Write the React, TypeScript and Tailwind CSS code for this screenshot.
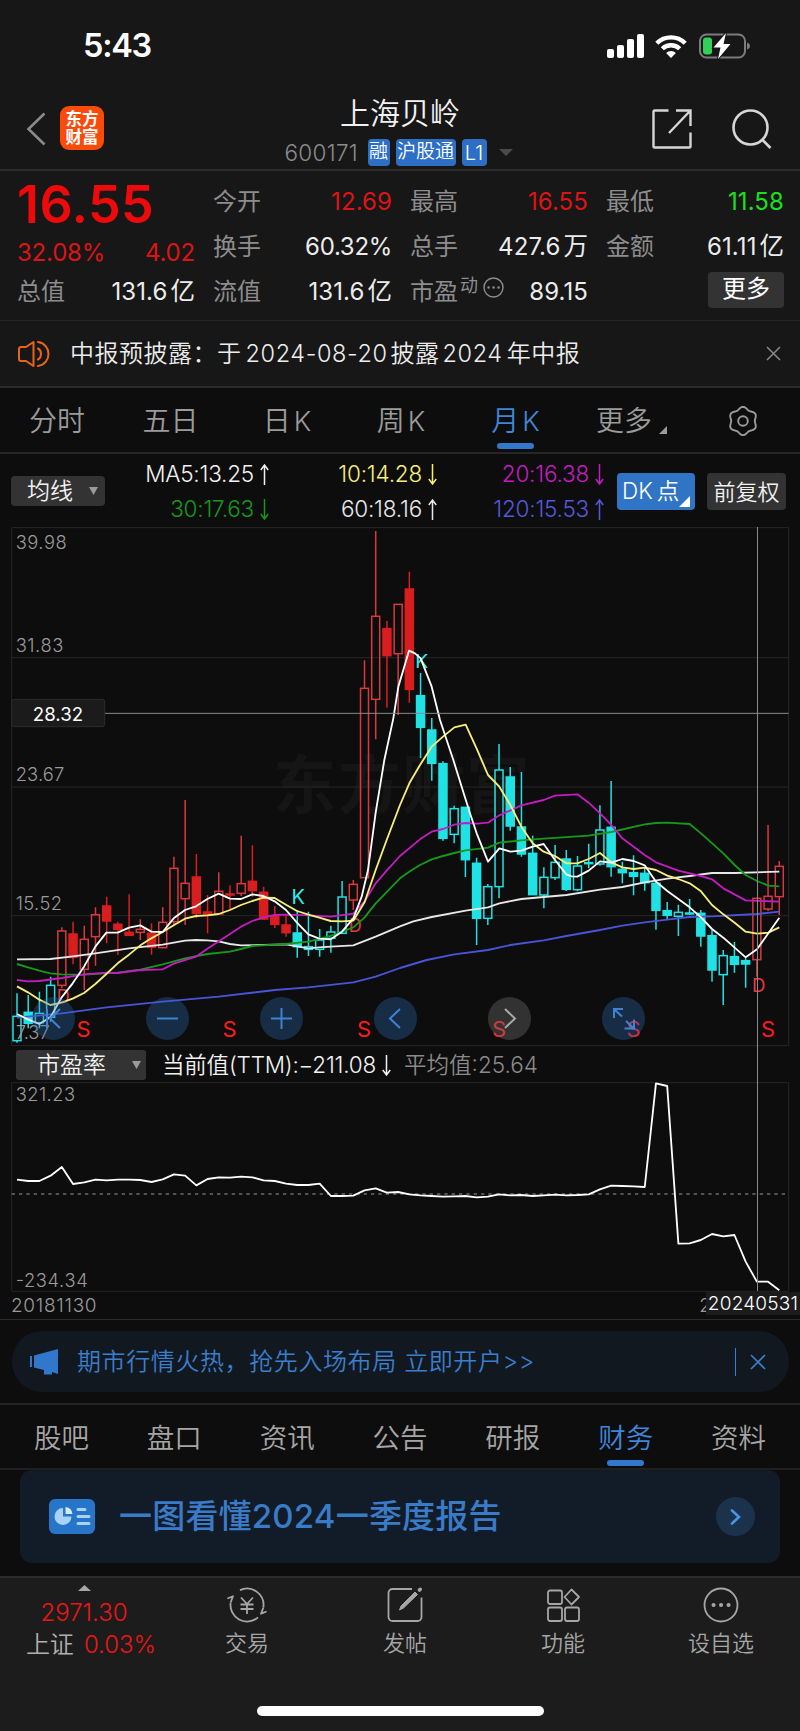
import type { ReactNode } from 'react';
import { clsx } from 'clsx';

type CandleKind = 'up' | 'upSolid' | 'down' | 'downSolid';
type Candle = [high: number, top: number, bottom: number, low: number, kind: CandleKind];

const U: CandleKind = 'up';
const US: CandleKind = 'upSolid';
const D: CandleKind = 'down';
const DS: CandleKind = 'downSolid';

// Monthly candles in chart units (3 units per pixel), oldest first
const CANDLES: Candle[] = [
  [640, 709, 782, 788, D], [645, 697, 730, 745, DS], [635, 700, 728, 745, D], [590, 616, 712, 725, D],
  [442, 453, 616, 625, U], [425, 462, 532, 553, US], [437, 478, 568, 630, U], [382, 404, 470, 557, U],
  [350, 378, 423, 490, US], [425, 433, 448, 525, US], [343, 457, 466, 466, US], [418, 448, 457, 480, U],
  [430, 460, 502, 524, US], [382, 427, 503, 505, U], [230, 265, 425, 435, U], [60, 310, 356, 435, U],
  [222, 291, 400, 415, US], [345, 396, 404, 460, US], [277, 334, 402, 402, U], [316, 342, 345, 388, US],
  [167, 311, 340, 348, U], [196, 304, 332, 350, US], [320, 337, 417, 420, US], [378, 408, 433, 444, US],
  [408, 435, 458, 470, US], [390, 459, 500, 533, DS], [395, 500, 508, 528, D], [447, 480, 508, 530, D],
  [437, 456, 475, 518, D], [303, 351, 460, 460, D], [300, 313, 360, 390, U], [-359, -275, 293, 293, U],
  [-747, -491, -242, -122, U], [-477, -454, -373, -217, US], [-527, -527, -379, -195, U], [-625, -573, -272, -232, US],
  [-321, -253, -158, -66, DS], [-186, -150, -50, 2, DS], [-56, -49, 175, 182, DS], [77, 86, 163, 190, D],
  [82, 82, 239, 291, DS], [233, 250, 415, 495, DS], [312, 320, 415, 435, D], [-108, -30, 320, 355, D],
  [-39, -9, 138, 152, DS], [-24, 141, 222, 230, DS], [167, 220, 344, 344, DS], [262, 292, 345, 385, D],
  [195, 247, 293, 300, D], [210, 237, 328, 333, DS], [228, 258, 329, 334, D], [191, 248, 251, 265, DS],
  [76, 150, 252, 257, D], [3, 142, 260, 290, DS], [245, 268, 278, 310, DS], [226, 278, 289, 346, DS],
  [262, 280, 308, 332, DS], [300, 310, 391, 449, DS], [366, 392, 406, 417, DS], [374, 397, 409, 468, D],
  [357, 399, 402, 405, DS], [390, 400, 468, 500, DS], [450, 467, 570, 605, DS], [510, 527, 584, 675, D],
  [486, 530, 553, 578, DS], [535, 542, 552, 623, DS], [355, 355, 539, 590, U], [135, 349, 387, 393, U],
  [243, 259, 350, 405, U],
];

const AVERAGES = [
  {
    color: '#4a54d8',
    points:
      '51,713 185,700 320,682 488,665 656,650 825,630 925,622 1060,607 1127,590 1200,564 1280,540 1363,523 1464,510 1531,495 1631,481 1699,468 1800,450 1867,437 1934,427 2002,419 2069,411 2136,409 2271,402 2338,395',
  },
  {
    color: '#e8e8e8',
    points:
      '51,538 151,537 219,529 286,520 387,505 488,494 555,482 588,480 622,481 656,484 690,492 723,496 790,495 858,493 925,505 958,502 992,500 1060,496 1127,470 1200,439 1240,424 1295,411 1397,392 1464,382 1498,370 1564,357 1699,345 1800,329 1867,321 1934,307 2002,296 2069,288 2136,279 2204,279 2338,275',
  },
  {
    color: '#17981b',
    points:
      '51,552 84,562 118,572 151,580 185,583 252,584 353,578 421,569 488,553 555,535 622,522 690,515 723,507 757,498 858,492 925,485 992,468 1026,455 1060,442 1094,412 1127,370 1200,295 1230,274 1260,255 1295,238 1329,228 1363,219 1397,211 1464,203 1498,188 1564,181 1631,176 1766,167 1834,156 1934,133 1968,129 2002,128 2069,132 2103,160 2170,220 2204,255 2237,285 2271,303 2305,317 2338,319',
  },
  {
    color: '#c31cc0',
    points:
      '51,600 84,604 118,603 185,594 252,583 320,578 353,579 421,570 488,568 521,551 588,530 622,506 690,462 723,440 757,423 790,412 824,405 858,404 925,406 992,410 1060,401 1094,364 1127,310 1160,272 1200,228 1260,178 1295,155 1329,147 1363,134 1397,129 1431,131 1464,128 1498,106 1564,76 1631,60 1665,47 1732,43 1766,68 1800,100 1834,135 1867,175 1934,225 1968,247 2035,272 2103,288 2136,298 2170,325 2237,361 2338,365',
  },
  {
    color: '#f7ef7a',
    points:
      '51,619 84,637 118,659 151,675 185,668 218,656 252,639 286,612 319,582 353,550 387,524 421,496 454,475 488,456 521,436 555,416 588,408 622,406 656,402 690,390 723,375 757,363 790,353 824,354 858,374 891,393 925,404 958,413 992,423 1026,424 1060,422 1094,366 1127,270 1160,180 1200,75 1228,10 1260,-45 1295,-100 1329,-130 1363,-158 1397,-166 1431,-92 1464,-15 1498,20 1531,75 1564,140 1598,190 1631,215 1665,228 1699,250 1732,250 1766,237 1800,219 1834,247 1867,262 1901,267 1934,263 1968,270 2002,287 2035,297 2069,310 2103,334 2136,375 2170,403 2204,428 2237,455 2271,461 2305,458 2338,442',
  },
  {
    color: '#ffffff',
    points:
      '51,702 84,718 118,732 151,712 168,682 185,652 218,610 252,560 286,500 319,458 353,458 387,443 421,436 454,455 488,456 521,415 555,390 588,379 622,357 656,341 690,356 723,357 757,343 790,348 824,364 858,390 891,428 925,463 958,476 992,478 1026,455 1060,415 1085,350 1104,270 1127,98 1153,-60 1180,-185 1195,-280 1227,-388 1245,-380 1262,-365 1295,-280 1320,-180 1360,-60 1388,30 1410,100 1430,160 1464,245 1498,205 1531,215 1564,212 1598,200 1631,192 1665,240 1699,283 1715,289 1732,290 1766,272 1800,244 1834,248 1867,237 1901,243 1934,256 1968,305 2002,333 2035,357 2069,382 2103,412 2136,447 2170,473 2204,503 2237,532 2271,508 2305,460 2338,413',
  },
];

const SIGNALS = [
  { x: 895, y: 373, text: 'K', color: '#35e8ea', size: 60 },
  { x: 1265, y: -336, text: 'K', color: '#35e8ea', size: 58 },
  { x: 190, y: 669, text: 'D', color: '#e23a3f', size: 54 },
  { x: 1066, y: 455, text: 'D', color: '#e23a3f', size: 54 },
  { x: 2276, y: 636, text: 'D', color: '#e23a3f', size: 56 },
  ...[251, 689, 1092, 1497, 1901, 2304].map((x) => ({ x, y: 771, text: 'S', color: '#ff1a1a', size: 66 })),
];

// Offsets from the top of the ratio pane, in the same units
const PE_VALUES = [
  419, 423, 423, 407, 381, 432, 427, 419, 421, 419, 419, 420, 426, 418, 403, 407, 436, 417, 412, 413, 410, 412, 421, 423,
  431, 435, 435, 431, 468, 468, 467, 451, 445, 458, 456, 463, 466, 468, 470, 469, 468, 472, 470, 463, 466, 465, 468, 466,
  464, 466, 465, 463, 448, 437, 438, 439, 441, 130, 138, 611, 610, 600, 582, 589, 585, 665, 725, 725, 751,
];

const candleX = (i: number) => 51 + i * 33.63;

// Six soft lobes around the centre, one of them pointing up
const GEAR_POINTS = Array.from({ length: 72 }, (_, i) => {
  const angle = (i / 72) * Math.PI * 2;
  const radius = 13 + 1.2 * Math.cos(6 * angle);
  return `${(15 + radius * Math.sin(angle)).toFixed(2)},${(15 - radius * Math.cos(angle)).toFixed(2)}`;
}).join(' ');

function Num({ children, className }: { children: ReactNode; className?: string }) {
  return <span className={clsx('whitespace-nowrap', className)}>{children}</span>;
}

function StatusBar() {
  return (
    <div className="flex h-[90px] items-center justify-between pl-[83px] pr-[50px] pt-px">
      <span className="pt-px text-[32.500px] font-semibold leading-none tracking-[-1.300px] text-white">5:43</span>
      <div className="flex items-center">
        <svg className="h-6 w-[37px]" viewBox="0 0 37 24" fill="#fff">
          <rect x="0" y="15" width="7" height="9" rx="2" />
          <rect x="10" y="11" width="7" height="13" rx="2" />
          <rect x="20" y="5" width="7" height="19" rx="2" />
          <rect x="30" y="0" width="7" height="24" rx="2" />
        </svg>
        <svg className="ml-[11px] h-6 w-8" viewBox="0 0 32 24" fill="none" stroke="#fff" strokeWidth="4.4">
          <path d="M1.8 9.2a20.3 20.3 0 0 1 28.4 0" />
          <path d="M7.3 14.8a12.4 12.4 0 0 1 17.4 0" />
          <path d="M16 24l-4.9-5a7 7 0 0 1 9.8 0z" fill="#fff" stroke="none" />
        </svg>
        <svg className="ml-3 h-[26px] w-[51px]" viewBox="0 0 51 26" fill="none">
          <rect x="1" y="1.5" width="45" height="23" rx="6.5" stroke="#7c7c7c" strokeWidth="2" />
          <path d="M48 9.5c2.4.8 3 2 3 3.500s-.6 2.700-3 3.500z" fill="#7c7c7c" />
          <rect x="4" y="4.500" width="9" height="17" rx="3" fill="#31d158" />
          <path d="M27 0L14.500 14.500h7L19 26 31.500 11h-7z" fill="#fff" stroke="#171717" strokeWidth="2" paintOrder="stroke" />
        </svg>
      </div>
    </div>
  );
}

function Header() {
  return (
    <header className="flex h-[81px] border-b-2 border-[#2b2b2b]">
      <div className="flex w-[240px] items-start pl-[26px] pt-4">
        <svg className="mt-[6px] h-[34px] w-5" viewBox="0 0 20 34" fill="none" stroke="#8a8a8a" strokeWidth="2.600">
          <path d="M18.500 1.500L2.500 17l16 15.500" />
        </svg>
        <div className="ml-[14px] flex size-[44px] flex-col items-center justify-center rounded-[9px] bg-[#fb4b0b] text-[16.500px] font-bold leading-[18px] text-white">
          <span>东方</span>
          <span>财富</span>
        </div>
      </div>
      <div className="flex flex-1 flex-col items-center">
        <h1 className="mt-[6px] text-[30px] leading-[34px] text-[#f2f2f2]">上海贝岭</h1>
        <div className="mt-[9px] flex h-[27px] items-center gap-[6px] pr-[3px] text-[21px]">
          <span className="w-[77px] text-[22.500px] tracking-[0.300px] text-[#8b8b8b]">600171</span>
          <span className="flex h-[27px] w-[22px] items-center justify-center rounded bg-[#2c6fc4] text-[19px] text-white">融</span>
          <span className="flex h-[27px] w-[60px] items-center justify-center whitespace-nowrap rounded bg-[#2c6fc4] text-[19px] text-white">沪股通</span>
          <span className="flex h-[27px] w-[25px] items-center justify-center rounded bg-[#2c6fc4] text-[20px] text-white">L1</span>
          <svg className="ml-[6px] h-[7px] w-[14px]" viewBox="0 0 14 7" fill="#4a4a4a">
            <path d="M0 0h14L7 7z" />
          </svg>
        </div>
      </div>
      <div className="flex w-[240px] items-start justify-end pr-[28px] pt-[19px]">
        <svg className="h-10 w-10" viewBox="0 0 40 40" fill="none" stroke="#d6d6d6" strokeWidth="2.400">
          <path d="M16.500 1.500H2.500a1 1 0 0 0-1 1v35a1 1 0 0 0 1 1h35a1 1 0 0 0 1-1V23.500M24 1.500h14.500V17M38 2L17 24" />
        </svg>
        <svg className="ml-10 h-10 w-[40px]" viewBox="0 0 40 40" fill="none" stroke="#d6d6d6" strokeWidth="2.600">
          <circle cx="18.500" cy="18.500" r="17" />
          <path d="M30 30.500l8.500 8.500" />
        </svg>
      </div>
    </header>
  );
}

function QuoteCell({ label, value, color = 'text-[#ececec]' }: { label: ReactNode; value: ReactNode; color?: string }) {
  return (
    <div className="flex h-[45px] items-center justify-between">
      <span className="text-[24px] tracking-normal text-[#8d8d8d]">{label}</span>
      <Num className={color}>{value}</Num>
    </div>
  );
}

function Unit({ children }: { children: ReactNode }) {
  return <span className="ml-[3px] text-[24.500px] tracking-normal">{children}</span>;
}

function Quote() {
  return (
    <section className="flex h-[149px] pl-[17px] pr-4 text-[24px] font-normal leading-none tracking-[0.100px]">
      <div className="w-[178px]">
        <div className="flex h-[60px] items-center pt-[7px] text-[52px] font-semibold tracking-[0.400px] text-[#ee0a0a]">16.55</div>
        <div className="flex h-[41px] items-center justify-between pt-[2px] tracking-[-0.200px] text-[#dc1414]">
          <span>32.08%</span>
          <span>4.02</span>
        </div>
        <div className="-mt-[3px]">
          <QuoteCell label="总值" value={<>131.6<Unit>亿</Unit></>} />
        </div>
      </div>
      <div className="ml-[18px] w-[179px] pt-2">
        <QuoteCell label="今开" value="12.69" color="text-[#dc1414]" />
        <QuoteCell label="换手" value={<span className="tracking-[-0.300px]">60.32%</span>} />
        <QuoteCell label="流值" value={<>131.6<Unit>亿</Unit></>} />
      </div>
      <div className="ml-[18px] w-[178px] pt-2">
        <QuoteCell label="最高" value="16.55" color="text-[#dc1414]" />
        <QuoteCell label="总手" value={<>427.6<Unit>万</Unit></>} />
        <QuoteCell
          label={
            <span className="flex items-center">
              市盈
              <span className="mb-3 ml-[2px] text-[18px]">动</span>
              <svg className="mb-2 ml-[5px] size-[21px]" viewBox="0 0 21 21" fill="none" stroke="#8d8d8d" strokeWidth="1.400">
                <circle cx="10.500" cy="10.500" r="9.500" />
                <path d="M5.500 10.500h.1M10.500 10.500h.1M15.500 10.500h.1" strokeLinecap="round" strokeWidth="2.400" />
              </svg>
            </span>
          }
          value="89.15"
        />
      </div>
      <div className="ml-[18px] w-[178px] pt-2">
        <QuoteCell label="最低" value="11.58" color="text-[#1be01b]" />
        <QuoteCell label="金额" value={<>61.11<Unit>亿</Unit></>} />
        <div className="flex h-[45px] items-center justify-end pb-[3px]">
          <button className="h-9 w-[76px] rounded bg-[#333] pb-0.5 text-[24px] tracking-normal text-white">更多</button>
        </div>
      </div>
    </section>
  );
}

function Notice() {
  return (
    <section className="flex h-[68px] items-center border-b-2 border-t border-b-[#2b2b2b] border-t-[#242424] pl-[18px] pr-[19px]">
      <svg className="h-[28px] w-[32px]" viewBox="0 0 32 28" fill="none" stroke="#e8641b" strokeWidth="2">
        <path d="M15.500 2v24L8 21H3a2 2 0 0 1-2-2V9a2 2 0 0 1 2-2h5z" strokeLinejoin="round" />
        <path d="M20 8.500c4 2 4 9 0 11M20 2c14 2 14 22 0 24" strokeLinecap="round" />
      </svg>
      <p className="ml-5 flex flex-1 items-baseline whitespace-nowrap text-[24px] tracking-[0.500px] text-[#ededed]">
        中报预披露：于
        <span className="ml-1 text-[23.500px] tracking-[0.600px]">2024-08-20</span>
        <span className="ml-[3px]">披露</span>
        <span className="ml-[3px] text-[23.500px] tracking-[0.600px]">2024</span>
        <span className="ml-1">年中报</span>
      </p>
      <svg className="size-[15px]" viewBox="0 0 15 15" stroke="#8a8a8a" strokeWidth="1.500">
        <path d="M1 1l13 13M14 1L1 14" />
      </svg>
    </section>
  );
}

const PERIODS = [
  { label: '分时', width: 'w-[114px]' },
  { label: '五日', width: 'w-[113px]' },
  { label: '日', width: 'w-[120px]', suffix: 'K' },
  { label: '周', width: 'w-[108px]', suffix: 'K' },
  { label: '月', width: 'w-[121px]', suffix: 'K', active: true },
];

function PeriodTabs() {
  return (
    <nav className="flex h-[66px] border-b-2 border-[#262626] text-[28px] leading-none text-[#9b9b9b]">
      {PERIODS.map(({ label, width, suffix, active }) => (
        <div key={label} className={clsx('flex flex-col items-center pt-[18px]', width, active && 'text-[#3f86da]')}>
          <span className="flex h-[30px] items-center">
            {label}
            {suffix && <span className="ml-[3px] text-[27px]">{suffix}</span>}
          </span>
          {active && <span className="mt-[7px] h-[6px] w-[37px] rounded-[3px] bg-[#3178cc]" />}
        </div>
      ))}
      <div className="ml-[20px] flex items-start pt-[18px]">
        <span className="flex h-[30px] items-center">更多</span>
        <svg className="ml-[7px] mt-[20px] size-2" viewBox="0 0 8 8" fill="#9b9b9b">
          <path d="M8 0v8H0z" />
        </svg>
      </div>
      <svg className="ml-[61px] mt-[18px] size-[30px]" viewBox="0 0 30 30" fill="none" stroke="#9b9b9b" strokeWidth="1.900">
        <polygon points={GEAR_POINTS} strokeLinejoin="round" />
        <circle cx="15" cy="15" r="4.800" />
      </svg>
    </nav>
  );
}

function Arrow({ down }: { down?: boolean }) {
  return (
    <svg className="ml-[6px] h-[21px] w-[9px]" viewBox="0 0 9 21" fill="none" stroke="currentColor" strokeWidth="1.500">
      <path d={down ? 'M4.500 0v20M.8 15l3.700 5 3.700-5' : 'M4.500 21V1M.8 6l3.700-5 3.700 5'} />
    </svg>
  );
}

const MA_LABELS = [
  { text: 'MA5:13.25', color: 'text-[#f2f2f2]', down: false },
  { text: '10:14.28', color: 'text-[#f7ef7a]', down: true },
  { text: '20:16.38', color: 'text-[#c31cc0]', down: true },
  { text: '30:17.63', color: 'text-[#17981b]', down: true },
  { text: '60:18.16', color: 'text-[#e8e8e8]', down: false },
  { text: '120:15.53', color: 'text-[#5358dd]', down: false },
];

function IndicatorBar() {
  return (
    <div className="flex h-[73px] items-start pl-[11px]">
      <button className="mt-[22px] flex h-[30px] w-[94px] items-center rounded bg-[#333] pl-4 text-[23px] leading-none text-[#f2f2f2]">
        均线
        <svg className="ml-[16px] h-[8px] w-[9px]" viewBox="0 0 9 8" fill="#9b9b9b">
          <path d="M0 0h9L4.500 8z" />
        </svg>
      </button>
      <div className="grid grid-cols-[164px_168px_167px] pt-[3px] text-[22.500px] leading-none tracking-[-0.200px]">
        {MA_LABELS.map(({ text, color, down }) => (
          <div key={text} className={clsx('flex h-[35px] items-center justify-end', color)}>
            {text}
            <Arrow down={down} />
          </div>
        ))}
      </div>
      <button className="relative ml-[13px] mt-[19px] h-[37px] w-[78px] whitespace-nowrap rounded bg-[#2f74c5] pl-[5px] text-left text-[22.500px] leading-none text-white">
        DK<span className="ml-1">点</span>
        <svg className="absolute bottom-[3px] right-[5px] size-[11px]" viewBox="0 0 11 11" fill="#fff">
          <path d="M11 0v11H0z" />
        </svg>
      </button>
      <button className="ml-3 mt-[19px] h-[37px] w-[79px] rounded bg-[#333] text-[22px] leading-none text-[#f2f2f2]">前复权</button>
    </div>
  );
}

const CHART_BUTTONS: { id: string; icon: ReactNode; muted?: boolean }[] = [
  { id: 'first', icon: <path d="M28 12L18 21.500 28 31M15 12v19" /> },
  { id: 'zoom-out', icon: <path d="M11 21.500h21" /> },
  { id: 'zoom-in', icon: <path d="M11 21.500h21M21.500 11v21" /> },
  { id: 'prev', icon: <path d="M26 12l-10 9.500L26 31" /> },
  { id: 'next', icon: <path d="M17 12l10 9.500L17 31" />, muted: true },
  { id: 'expand', icon: <path d="M12 21v-9h9M12 12l8 7.500M22.500 31.500H32v-9M32 31.500L24 24" /> },
];

function CandleChart() {
  return (
    <div className="relative h-[520px]">
      <svg className="block h-[520px] w-[800px]" viewBox="0 -759 2400 1560" fill="none">
        <text
          x="1204"
          y="84"
          textAnchor="middle"
          fontSize="190"
          fontWeight="700"
          fill="#151515"
          textLength="770"
          className="font-['Noto_Sans_CJK_SC',sans-serif]"
        >
          东方财富
        </text>
        <path d="M35-757H2366V797H35zM35-367H2366M35 21H2366M35 407H2366" stroke="#262626" strokeWidth="3" />
        {CANDLES.map(([high, top, bottom, low, kind], i) => {
          const x = candleX(i);
          const up = kind === 'up' || kind === 'upSolid';
          const solid = kind === 'upSolid' || kind === 'downSolid';
          const color = up ? (solid ? '#d81e1f' : '#d9383c') : '#20e2e4';
          return (
            <g key={i} stroke={color} strokeWidth="4.500">
              <path d={`M${x} ${high}V${top}M${x} ${bottom}V${low}`} />
              <rect x={x - 12} y={top} width="24" height={bottom - top} fill={solid ? color : 'none'} />
            </g>
          );
        })}
        {SIGNALS.map(({ x, y, text, color, size }) => (
          <text key={`${x}-${y}`} x={x} y={y} fontSize={size} fill={color} textAnchor="middle" fontWeight="400">
            {text}
          </text>
        ))}
        {AVERAGES.map(({ color, points }) => (
          <polyline key={color} points={points} stroke={color} strokeWidth="5.500" strokeLinejoin="round" />
        ))}
        <path d="M315-200H2366" stroke="#8a8a8a" strokeWidth="3" />
        <rect x="35" y="-242" width="279" height="82" rx="8" fill="#1b1b1b" stroke="#2c2c2c" strokeWidth="3" />
        <text x="174" y="-177" fontSize="56" fill="#fff" textAnchor="middle" fontWeight="400">28.32</text>
        <g fontSize="55" fill="#9a9a9a">
          <text x="47" y="-694" textLength="153">39.98</text>
          <text x="47" y="-384" textLength="143">31.83</text>
          <text x="47" y="3" textLength="146">23.67</text>
          <text x="47" y="389" textLength="139">15.52</text>
          <text x="47" y="778" textLength="102">7.37</text>
        </g>
      </svg>
      <div className="absolute left-[32px] top-[470px] flex gap-[71px]">
        {CHART_BUTTONS.map(({ id, icon, muted }) => (
          <button key={id} className={clsx('size-[43px] rounded-full', muted ? 'bg-[#777]/35' : 'bg-[#2e6cb8]/33')}>
            <svg viewBox="0 0 43 43" fill="none" stroke={muted ? '#a8a8a8' : '#3f82d2'} strokeWidth="2">
              {icon}
            </svg>
          </button>
        ))}
      </div>
    </div>
  );
}

function RatioPane() {
  const points = PE_VALUES.map((value, i) => `${candleX(i)},${value}`).join(' ');
  return (
    <>
      <div className="flex h-[35px] items-center pl-4 pt-px text-[22px] leading-none">
        <button className="flex h-[30px] w-[130px] items-center rounded-[3px] bg-[#333] pl-[21px] text-[23px] text-[#f2f2f2]">
          市盈率
          <svg className="ml-[26px] h-[8px] w-[9px]" viewBox="0 0 9 8" fill="#9b9b9b">
            <path d="M0 0h9L4.500 8z" />
          </svg>
        </button>
        <span className="ml-4 flex items-center whitespace-nowrap text-[22.500px] tracking-[-0.200px] text-[#f2f2f2]">
          当前值(TTM):−211.08
          <Arrow down />
        </span>
        <span className="ml-[13px] whitespace-nowrap text-[22.500px] text-[#8a8a8a]">平均值:25.64</span>
      </div>
      <svg className="block h-[210px] w-[800px]" viewBox="0 126 2400 630" fill="none">
        <path d="M35 128H2366V754H35z" stroke="#262626" strokeWidth="3" />
        <path d="M35 462H2366" stroke="#9a9a9a" strokeWidth="3" strokeDasharray="10 12" />
        <polyline points={points} stroke="#fff" strokeWidth="5.500" strokeLinejoin="round" />
        <g fontSize="55" fill="#9a9a9a">
          <text x="47" y="184" textLength="178">321.23</text>
          <text x="47" y="742" textLength="216">-234.34</text>
        </g>
      </svg>
      <div className="relative flex h-[28px] items-center border-b border-[#2b2b2b] pb-px pl-[11px] text-[19px] leading-none text-[#9a9a9a]">
        <span className="flex-1 tracking-[0.700px]">20181130</span>
        <span className="mr-[89px]">2</span>
        <span className="absolute right-0 top-0 flex h-[23px] w-[94px] items-center justify-center bg-[#1c1c1c] tracking-[0.200px] text-white">
          20240531
        </span>
      </div>
    </>
  );
}

function PromoBar() {
  return (
    <div className="border-b-2 border-[#242424] pb-[11px] pl-3 pr-[11px] pt-[11px]">
      <div className="flex h-[61px] items-center rounded-[30px] bg-[#11181f] pl-[17px] pr-[23px] text-[#3b7ecb]">
        <svg className="h-[26px] w-[30px]" viewBox="0 0 30 26" fill="#3178cc">
          <path d="M1 7h2v11H1zM5 6.500L29 0v25l-6-2v2.500h-8V21L5 18.500z" />
        </svg>
        <p className="ml-[18px] flex-1 whitespace-pre text-[24px] tracking-[0.600px]">期市行情火热，抢先入场布局 立即开户&gt;&gt;</p>
        <span className="h-[28px] w-[1.500px] bg-[#3b7ecb]" />
        <svg className="ml-[14px] size-4" viewBox="0 0 16 16" stroke="#3b7ecb" strokeWidth="1.700">
          <path d="M1 1l14 14M15 1L1 15" />
        </svg>
      </div>
    </div>
  );
}

const INFO_TABS = ['股吧', '盘口', '资讯', '公告', '研报', '财务', '资料'];

function InfoTabs() {
  return (
    <nav className="flex h-[65px] border-b-2 border-[#1f1f1f] px-[5px] text-[27.500px] leading-none text-[#a6a6a6]">
      {INFO_TABS.map((tab) => (
        <div key={tab} className={clsx('flex flex-1 flex-col items-center pt-[17px]', tab === '财务' && 'text-[#3f86da]')}>
          <span className="h-[33px] leading-[33px]">{tab}</span>
          {tab === '财务' && <span className="mt-[5px] h-[6px] w-[37px] shrink-0 rounded-[3px] bg-[#3178cc]" />}
        </div>
      ))}
    </nav>
  );
}

function ReportCard() {
  return (
    <div className="h-[106px] px-[20px]">
      <div className="flex h-[93px] items-center rounded-xl bg-[#121c28] pl-[29px] pr-[25px]">
        <svg className="h-[35px] w-[46px]" viewBox="0 0 46 35">
          <rect width="46" height="35" rx="6" fill="#2775c9" />
          <path d="M14 9a8.500 8.500 0 1 0 8.500 8.500H14z" fill="#a9d2f7" />
          <path d="M16.500 8a8 8 0 0 1 7 7h-7z" fill="#d5e9fb" />
          <path d="M29 10.500h7M29 17.500h11M29 24.500h11" stroke="#a9d2f7" strokeWidth="3" strokeLinecap="round" />
        </svg>
        <p className="ml-[24px] flex-1 whitespace-nowrap pt-px text-[33px] font-medium tracking-[0.200px] text-[#3a7bc8]">一图看懂2024一季度报告</p>
        <span className="flex size-[39px] items-center justify-center rounded-full bg-[#1b324c]">
          <svg className="h-4 w-[11px]" viewBox="0 0 11 16" fill="none" stroke="#4a94e6" strokeWidth="2.600" strokeLinecap="round">
            <path d="M2 1.500L9 8l-7 6.500" />
          </svg>
        </span>
      </div>
    </div>
  );
}

const ACTIONS: { label: string; icon: ReactNode }[] = [
  {
    label: '交易',
    icon: (
      <>
        <path d="M13 2.600A16.500 16.500 0 0 1 36.300 20.200M31 29.800A16.500 16.500 0 0 1 3.700 14.800" />
        <path d="M.4 11l5.600-2.200-2.300 6M39.600 24L34 26.200l2.300-6" strokeLinejoin="round" />
        <path d="M14 10l6 6.500 6-6.500M20 16.500V26.500M13.500 17h13M13.500 21.500h13" />
      </>
    ),
  },
  {
    label: '发帖',
    icon: (
      <>
        <path d="M27 1.500H7.500a4 4 0 0 0-4 4v24a4 4 0 0 0 4 4h25a4 4 0 0 0 4-4V10" />
        <path d="M14.500 22.500l1.500-4L30 4.500l2.500 2.500L18.500 20.500z" fill="#a6a6a6" strokeWidth="1" />
        <path d="M34.500 2.500l.7-.7" strokeWidth="3.600" strokeLinecap="round" />
      </>
    ),
  },
  {
    label: '功能',
    icon: (
      <>
        <rect x="5" y="3" width="14" height="13.500" rx="2" />
        <rect x="5" y="20" width="14" height="13.500" rx="2" />
        <rect x="22" y="20" width="14" height="13.500" rx="2" />
        <path d="M28.500 2l7.500 7.500-7.500 7.500-7-7.500z" strokeLinejoin="round" />
      </>
    ),
  },
  {
    label: '设自选',
    icon: (
      <>
        <circle cx="20" cy="17.500" r="16.500" />
        <path d="M12.500 17.500h.1M20 17.500h.1M27.500 17.500h.1" strokeWidth="4" strokeLinecap="round" />
      </>
    ),
  },
];

function BottomBar() {
  return (
    <footer className="relative flex h-[155px] border-t-2 border-[#2b2b2b] bg-[#1c1c1c]">
      <div className="flex w-[168px] flex-col items-center pt-[7px] text-[24px] leading-none text-[#ee1515]">
        <svg className="h-[6px] w-[13px]" viewBox="0 0 13 6" fill="#a6a6a6">
          <path d="M6.500 0L13 6H0z" />
        </svg>
        <span className="mt-[10px] h-[24px] text-[24px]">2971.30</span>
        <span className="mt-[8px] flex items-center gap-[10px] pl-[14px] text-[24px]">
          <span className="text-[24px] text-[#b0b0b0]">上证</span>0.03%
        </span>
      </div>
      {ACTIONS.map(({ label, icon }) => (
        <div key={label} className="flex w-[158px] flex-col items-center pt-[9px] text-[22px] leading-none text-[#a6a6a6]">
          <svg className="h-9 w-10" viewBox="0 0 40 35" fill="none" stroke="#a6a6a6" strokeWidth="1.800">
            {icon}
          </svg>
          <span className="mt-[9px]">{label}</span>
        </div>
      ))}
      <div className="absolute bottom-[15px] left-[257px] h-[10px] w-[287px] rounded-full bg-white" />
    </footer>
  );
}

export default function App() {
  return (
    <div className="h-[1731px] w-[800px] overflow-hidden bg-[#0d0d0d] font-['Inter','Noto_Sans_CJK_SC',sans-serif] font-[350]">
      <div className="bg-[#171717]">
        <StatusBar />
        <Header />
        <Quote />
        <Notice />
      </div>
      <PeriodTabs />
      <IndicatorBar />
      <div className="relative">
        <CandleChart />
        <RatioPane />
        <div className="absolute left-[757px] top-0 h-[764px] w-px bg-[#8a8a8a]" />
      </div>
      <PromoBar />
      <InfoTabs />
      <ReportCard />
      <BottomBar />
    </div>
  );
}
